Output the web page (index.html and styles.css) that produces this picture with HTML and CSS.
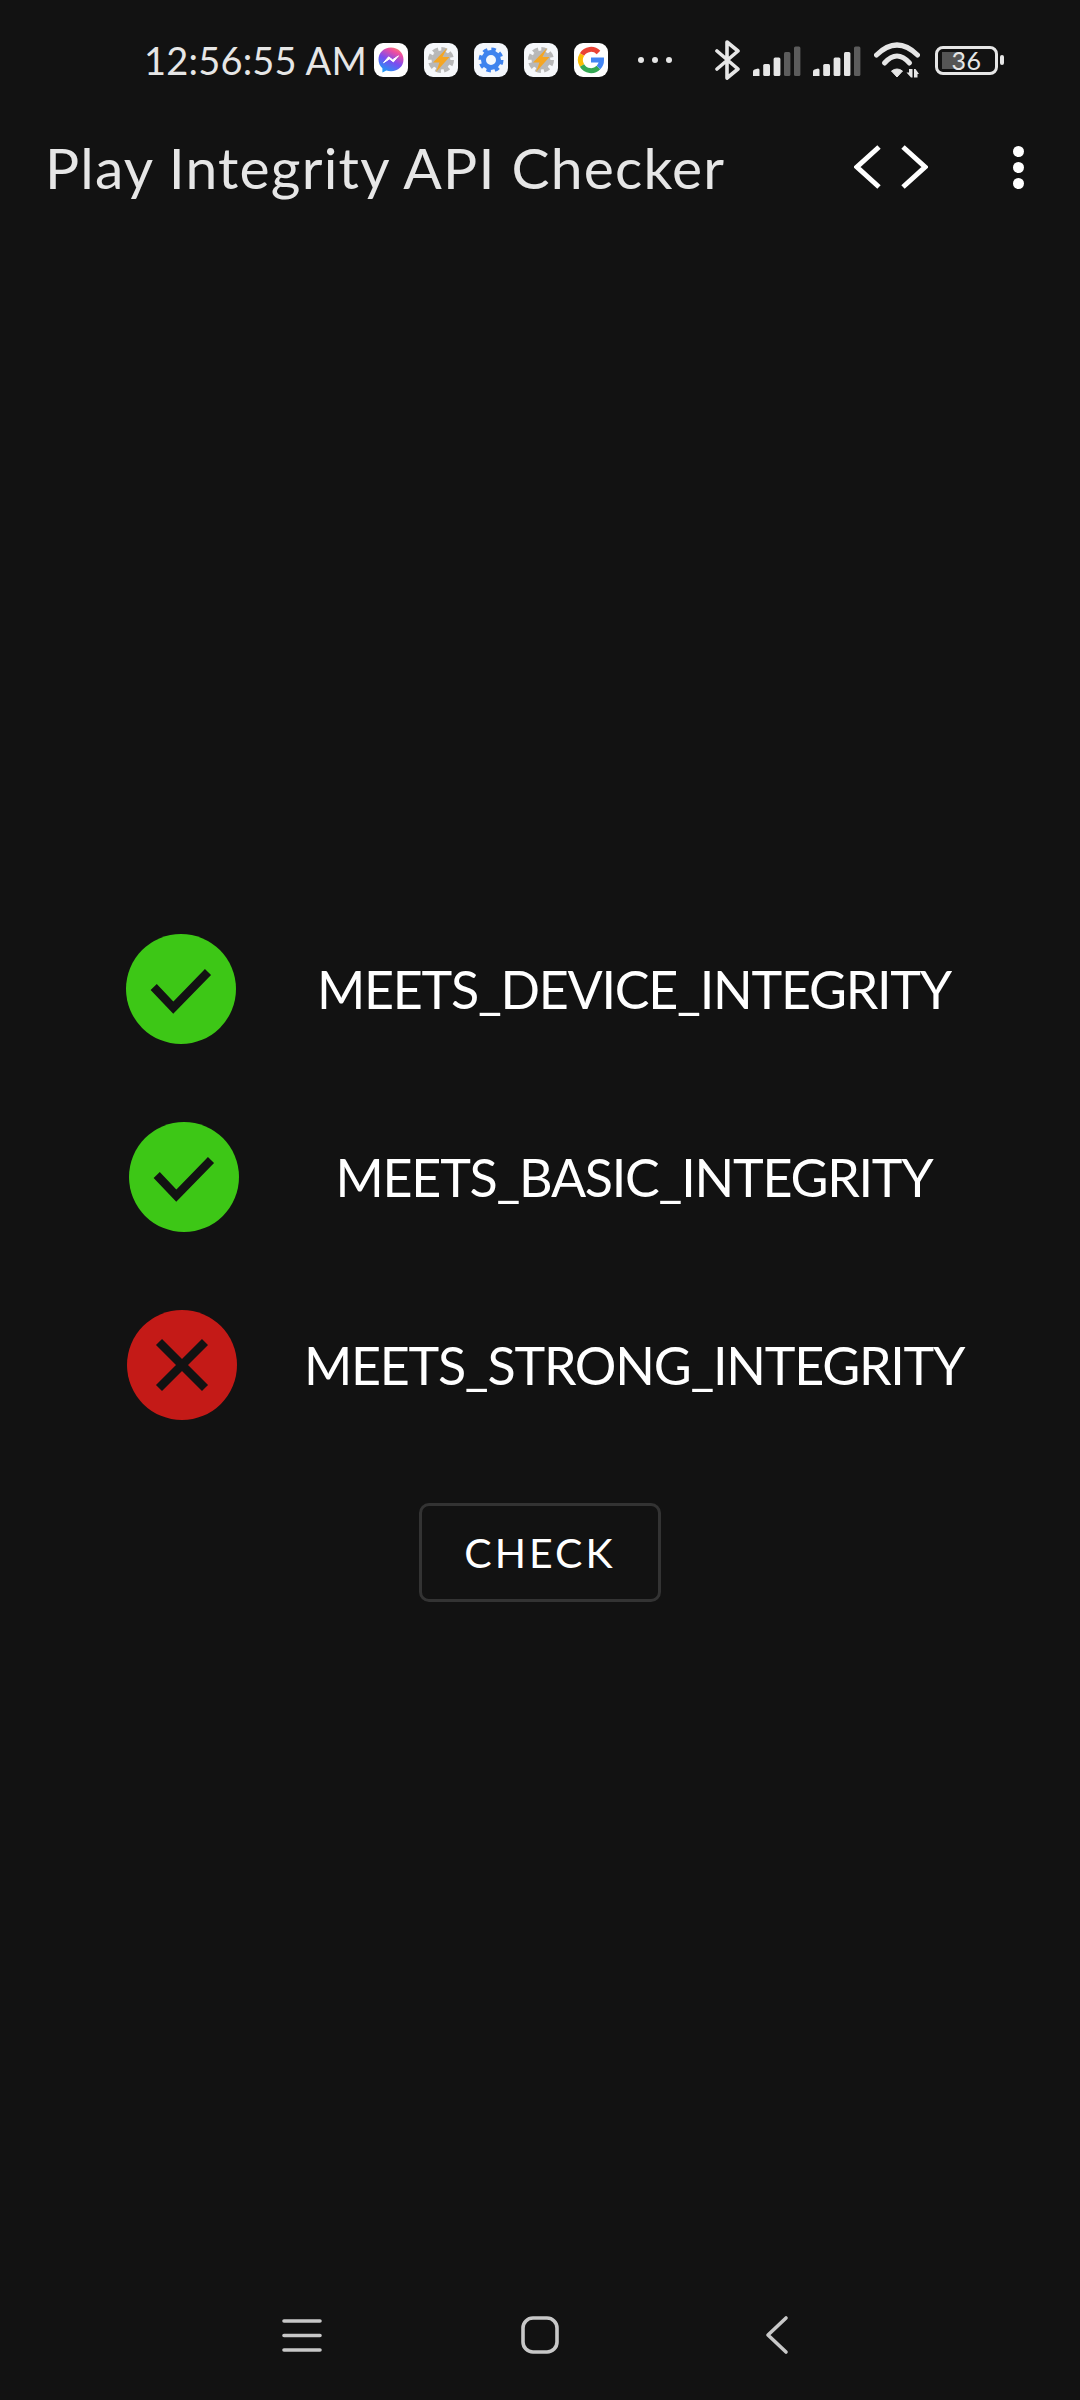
FILE: index.html
```html
<!DOCTYPE html>
<html lang="en">
<head>
  <meta charset="UTF-8">
  <meta name="viewport" content="width=device-width, initial-scale=1.0">
  <title>Play Integrity API Checker</title>
  <link rel="stylesheet" href="styles.css">
</head>
<body>
  <svg class="defs" width="0" height="0">
    <defs>
      <linearGradient id="messenger-fill" x1="0.3" y1="1" x2="0.8" y2="0">
        <stop offset="0" stop-color="#1e9bf5"/>
        <stop offset="0.45" stop-color="#7a4df0"/>
        <stop offset="0.8" stop-color="#ef4da0"/>
        <stop offset="1" stop-color="#f78a6a"/>
      </linearGradient>
      <symbol id="tasker" viewBox="0 0 34 34">
        <rect width="34" height="34" rx="9" fill="#f6f8fb"/>
        <circle cx="17" cy="17" r="9.5" fill="#b8b8b8"/>
        <circle cx="17" cy="17" r="11" fill="none" stroke="#b8b8b8" stroke-width="4" stroke-dasharray="5.5 3.14"/>
        <path d="M23 5 L9 19.5 H15.5 L12 29 L25.5 14 H18.5 Z" fill="#f5a623"/>
      </symbol>
    </defs>
  </svg>

  <header class="status-bar">
    <span class="clock">12:56:55 AM</span>
    <div class="notif-icons">
      <svg class="notif" viewBox="0 0 34 34">
        <rect width="34" height="34" rx="9" fill="#fff"/>
        <path d="M17 4.5 C9.8 4.5 4.5 9.7 4.5 16.5 C4.5 20.1 6 23.2 8.4 25.3 V29.6 L12.4 27.4 C13.8 27.9 15.4 28.2 17 28.2 C24.2 28.2 29.5 23.2 29.5 16.5 C29.5 9.7 24.2 4.5 17 4.5 Z" fill="url(#messenger-fill)"/>
        <path d="M9.5 19.8 L14.6 13.8 L18.6 16.8 L24.5 12.8 L19.4 18.9 L15.5 15.9 Z" fill="#fff" stroke="#fff" stroke-width="1" stroke-linejoin="round"/>
      </svg>
      <svg class="notif"><use href="#tasker"/></svg>
      <svg class="notif" viewBox="0 0 34 34">
        <rect width="34" height="34" rx="9" fill="#f4f7fc"/>
        <circle cx="17" cy="17" r="7.5" fill="none" stroke="#3f83ee" stroke-width="5"/>
        <circle cx="17" cy="17" r="10.5" fill="none" stroke="#3f83ee" stroke-width="4" stroke-dasharray="4.4 3.85"/>
      </svg>
      <svg class="notif"><use href="#tasker"/></svg>
      <svg class="notif" viewBox="0 0 34 34">
        <rect width="34" height="34" rx="9" fill="#fff"/>
        <g fill="none" stroke-width="5">
          <path d="M24.5 9.5 A10.5 10.5 0 0 0 8 11.5" stroke="#ea4335"/>
          <path d="M8 11.5 A10.5 10.5 0 0 0 8 22.5" stroke="#fbbc05"/>
          <path d="M8 22.5 A10.5 10.5 0 0 0 24.5 24.5" stroke="#34a853"/>
          <path d="M24.5 24.5 A10.5 10.5 0 0 0 27.5 17 H17" stroke="#4285f4"/>
        </g>
      </svg>
    </div>
    <div class="overflow-dots"><i></i><i></i><i></i></div>
    <svg class="bluetooth" viewBox="0 0 26 40">
      <path d="M2 11 L23 29 L12 38 V2 L23 11 L2 29" fill="none" stroke="#e6e6e6" stroke-width="3.6" stroke-linecap="round" stroke-linejoin="round"/>
    </svg>
    <svg class="signal" viewBox="0 0 48 30">
      <path d="M0 30 V25.5 Q0 24 1.5 23.5 L5 22.5 Q6.5 22.5 6.5 24 V30 Z" fill="#e6e6e6"/>
      <rect x="10.2" y="18" width="6.8" height="12" rx="1.5" fill="#e6e6e6"/>
      <rect x="20.6" y="11.5" width="6.8" height="18.5" rx="1.5" fill="#e6e6e6"/>
      <rect x="31" y="6" width="6.4" height="24" rx="1.5" fill="#5c5c5c"/>
      <rect x="41" y="0.5" width="6.4" height="29.5" rx="1.5" fill="#5c5c5c"/>
    </svg>
    <svg class="signal signal-second" viewBox="0 0 48 30">
      <path d="M0 30 V25.5 Q0 24 1.5 23.5 L5 22.5 Q6.5 22.5 6.5 24 V30 Z" fill="#e6e6e6"/>
      <rect x="10.2" y="18" width="6.8" height="12" rx="1.5" fill="#e6e6e6"/>
      <rect x="20.6" y="11.5" width="6.8" height="18.5" rx="1.5" fill="#e6e6e6"/>
      <rect x="31" y="6" width="6.4" height="24" rx="1.5" fill="#e6e6e6"/>
      <rect x="41" y="0.5" width="6.4" height="29.5" rx="1.5" fill="#5c5c5c"/>
    </svg>
    <svg class="wifi" viewBox="0 0 46 36">
      <path d="M2.5 13 Q23 -7 43.5 13" fill="none" stroke="#e6e6e6" stroke-width="5" stroke-linecap="round"/>
      <path d="M10.5 21 Q23 7 35.5 21" fill="none" stroke="#e6e6e6" stroke-width="5" stroke-linecap="round"/>
      <path d="M17.5 29 Q23 25 28.5 29 L23 35 Z" fill="#e6e6e6" stroke="#e6e6e6" stroke-linejoin="round"/>
      <path d="M32.5 30.5 H35 V27 H38.5 V35.5 H37 Z" fill="#e6e6e6"/>
      <path d="M40 35.5 V27 H41.5 L45 32 H43.5 V35.5 Z" fill="#e6e6e6"/>
    </svg>
    <div class="battery-wrap">
      <div class="battery">36</div>
      <span class="battery-nub"></span>
    </div>
  </header>

  <div class="app-bar">
    <h1 class="app-title">Play Integrity API Checker</h1>
    <svg class="code-icon" viewBox="0 0 74 44">
      <path d="M25 2 L3 22 L25 42 M49 2 L71 22 L49 42" fill="none" stroke="#fff" stroke-width="5" stroke-linejoin="miter"/>
    </svg>
    <div class="more-icon"><i></i><i></i><i></i></div>
  </div>

  <main class="checks">
    <div class="check-row row-device">
      <svg class="result" viewBox="0 0 110 110">
        <circle cx="55" cy="55" r="55" fill="#3dc716"/>
        <path d="M27.7 53 L47.3 73.7 L82 38" fill="none" stroke="#121212" stroke-width="8.5"/>
      </svg>
      <span class="check-label">MEETS_DEVICE_INTEGRITY</span>
    </div>
    <div class="check-row row-basic">
      <svg class="result" viewBox="0 0 110 110">
        <circle cx="55" cy="55" r="55" fill="#3dc716"/>
        <path d="M27.7 53 L47.3 73.7 L82 38" fill="none" stroke="#121212" stroke-width="8.5"/>
      </svg>
      <span class="check-label">MEETS_BASIC_INTEGRITY</span>
    </div>
    <div class="check-row row-strong">
      <svg class="result" viewBox="0 0 110 110">
        <circle cx="55" cy="55" r="55" fill="#c41a17"/>
        <path d="M32 32 L78 78 M78 32 L32 78" fill="none" stroke="#121212" stroke-width="8.5"/>
      </svg>
      <span class="check-label">MEETS_STRONG_INTEGRITY</span>
    </div>
    <button class="check-btn">CHECK</button>
  </main>

  <footer class="nav-bar">
    <svg class="nav-icon" viewBox="0 0 40 40">
      <path d="M2 6 H38 M2 20.5 H38 M2 35 H38" fill="none" stroke="#c8c8c8" stroke-width="3.6" stroke-linecap="round"/>
    </svg>
    <svg class="nav-icon" viewBox="0 0 40 40">
      <rect x="3" y="3" width="34" height="34" rx="10" fill="none" stroke="#c8c8c8" stroke-width="3.6"/>
    </svg>
    <svg class="nav-icon" viewBox="0 0 40 40">
      <path d="M29 3 L11 20 L29 37" fill="none" stroke="#c8c8c8" stroke-width="3.6" stroke-linecap="round" stroke-linejoin="round"/>
    </svg>
  </footer>
</body>
</html>
```

FILE: styles.css
```css
/* Play Integrity checker screen */
* {
  box-sizing: border-box;
}

body {
  font-family: 'Lato', 'Liberation Sans', sans-serif;
  margin: 0;
  padding: 0;
  width: 1080px;
  height: 2400px;
  background-color: #121212;
  color: #fff;
  display: flex;
  flex-direction: column;
  overflow: hidden;
}

.defs {
  display: block;
}

/* status bar */
.status-bar {
  height: 120px;
  padding-left: 144px;
  display: flex;
  align-items: center;
  color: #e6e6e6;
}

.clock {
  width: 230px;
  font-size: 38px;
  letter-spacing: 0.2px;
  white-space: nowrap;
}

.notif-icons {
  display: flex;
  gap: 16px;
}

.notif {
  width: 34px;
  height: 34px;
  display: block;
}

.overflow-dots {
  margin-left: 30px;
  display: flex;
  gap: 8px;
}

.overflow-dots i {
  width: 6px;
  height: 6px;
  border-radius: 50%;
  background-color: #e6e6e6;
}

.bluetooth {
  width: 26px;
  height: 40px;
  margin-left: 43px;
}

.signal {
  width: 48px;
  height: 30px;
  margin-left: 12px;
  margin-top: 1px;
}

.signal-second {
  margin-left: 12px;
}

.wifi {
  width: 46px;
  height: 36px;
  margin-left: 13px;
}

.battery-wrap {
  margin-left: 15px;
  display: flex;
  align-items: center;
  gap: 2px;
}

.battery {
  width: 63px;
  height: 29px;
  border: 3px solid #e6e6e6;
  border-radius: 8px;
  background: linear-gradient(#555, #555) no-repeat 4px 3px / 20px 17px;
  font-size: 25px;
  letter-spacing: 0.5px;
  line-height: 23px;
  text-align: center;
}

.battery-nub {
  width: 4px;
  height: 10px;
  border-radius: 2px;
  background-color: #e6e6e6;
}

/* app bar */
.app-bar {
  height: 94px;
  padding-left: 45px;
  display: flex;
  align-items: center;
}

.app-title {
  margin: 0;
  flex: 1;
  font-size: 57px;
  font-weight: 400;
  letter-spacing: 1.2px;
  color: #e6e6e6;
  white-space: nowrap;
}

.code-icon {
  width: 74px;
  height: 44px;
}

.more-icon {
  margin-left: 85px;
  margin-right: 56px;
  display: flex;
  flex-direction: column;
  gap: 5px;
}

.more-icon i {
  width: 11px;
  height: 11px;
  border-radius: 50%;
  background-color: #fff;
}

/* result rows */
.checks {
  padding-top: 720px;
  display: flex;
  flex-direction: column;
  gap: 78px;
}

.check-row {
  height: 110px;
  display: flex;
  align-items: center;
}

.row-device {
  padding-left: 126px;
}

.row-basic {
  padding-left: 129px;
}

.row-strong {
  padding-left: 127px;
}

.result {
  width: 110px;
  height: 110px;
  flex: none;
}

.row-device .check-label {
  margin-left: 68px;
}

.row-basic .check-label {
  margin-left: 65px;
}

.row-strong .check-label {
  margin-left: 67px;
}

.check-label {
  width: 660px;
  font-size: 52px;
  letter-spacing: -1.25px;
  text-align: center;
  white-space: nowrap;
}

.check-btn {
  width: 242px;
  height: 99px;
  margin: 5px auto 0;
  background: none;
  border: 3px solid #333;
  border-radius: 10px;
  color: #fff;
  font-family: inherit;
  font-size: 41px;
  letter-spacing: 3px;
}

/* bottom nav */
.nav-bar {
  margin-top: auto;
  height: 130px;
  padding: 45px 283px 45px 282px;
  display: flex;
  justify-content: space-between;
}

.nav-icon {
  width: 40px;
  height: 40px;
}
```
